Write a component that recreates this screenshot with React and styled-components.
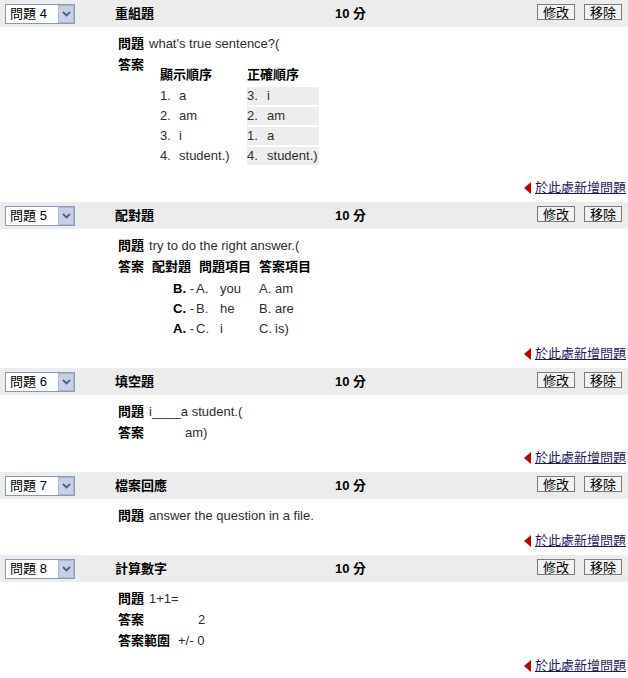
import React from 'react';
import styled, { createGlobalStyle } from 'styled-components';

const GlobalStyle = createGlobalStyle`
  body {
    margin: 0;
    background: #fff;
    font-family: "Liberation Sans", "Noto Sans CJK TC", sans-serif;
    font-size: 13px;
    color: #000;
  }
`;

const Page = styled.div`
  width: 628px;
`;

const Header = styled.div`
  display: flex;
  align-items: center;
  height: 27px;
  background: #ececec;
`;

const SelectCell = styled.div`
  width: 110px;
  padding-left: 5px;
`;

const FakeSelect = styled.div`
  display: flex;
  align-items: center;
  box-sizing: border-box;
  width: 70px;
  height: 20px;
  background: #fff;
  border: 1px solid #7f9db9;
`;

const SelectText = styled.span`
  flex: 1;
  padding-left: 4px;
  line-height: 18px;
`;

const SelectArrow = styled.span`
  display: flex;
  align-items: center;
  justify-content: center;
  box-sizing: border-box;
  width: 16px;
  height: 18px;
  background: #c8cfe4;
  border: 1px solid #aeb7d0;
`;

const TypeName = styled.div`
  width: 220px;
  font-weight: bold;
  line-height: 20px;
`;

const Score = styled.div`
  flex: 1;
  font-weight: bold;
  line-height: 20px;
`;

const Actions = styled.div`
  display: flex;
  gap: 9px;
  padding-right: 6px;
  align-self: flex-start;
  padding-top: 4px;
`;

const Btn = styled.button`
  box-sizing: border-box;
  height: 16px;
  padding: 0 5px;
  border: 1px solid #7a7a7a;
  background: #f2f2f2;
  font-family: inherit;
  font-size: 13px;
  line-height: 13px;
  color: #000;
`;

const Body = styled.div`
  padding: 6px 0 0 118px;
`;

const Line = styled.div`
  display: flex;
  align-items: flex-start;
  line-height: 21px;
`;

const Label = styled.span`
  font-weight: bold;
  margin-right: 5px;
`;

const Value = styled.span`
  color: #2e2e2e;
  padding-left: ${p => p.$indent || 0}px;
`;

const OrderTable = styled.div`
  display: grid;
  grid-template-columns: 87px 72px;
  grid-template-rows: 22px;
  grid-auto-rows: 20px;
  margin: 10px 0 7px 11px;
  color: #2e2e2e;
`;

const HeadCell = styled.div`
  font-weight: bold;
  color: #000;
  line-height: 21px;
  white-space: nowrap;
  padding-left: ${p => p.$pad || 0}px;
`;

const OrderCell = styled.div`
  line-height: 20px;
  ${p => p.$shaded && `
    background: #ededed;
    height: 18px;
    line-height: 18px;
    margin: 1px 0;
  `}
`;

const Num = styled.span`
  display: inline-block;
  width: ${p => p.$w}px;
`;

const MatchTable = styled.div`
  display: grid;
  grid-template-columns: 44px 63px 60px;
  grid-template-rows: 23px;
  grid-auto-rows: 20px;
  margin-left: 3px;
  color: #2e2e2e;
  line-height: 20px;
`;

const PairCell = styled.div`
  text-align: right;
  padding-right: 2px;
  white-space: nowrap;
  & b { color: #000; }
`;

const AddRow = styled.div`
  display: flex;
  justify-content: flex-end;
  align-items: center;
  height: 20px;
  margin: 5px 2px 4px 0;
`;

const Triangle = styled.span`
  width: 0;
  height: 0;
  border-top: 6px solid transparent;
  border-bottom: 6px solid transparent;
  border-right: 7px solid #c20000;
  margin-right: 4px;
`;

const AddLink = styled.a`
  color: #1d1d5c;
  text-decoration: underline;
  line-height: 20px;
`;

const Chevron = () => (
  <svg width="9" height="6" viewBox="0 0 9 6">
    <path d="M1 1 L4.5 4.5 L8 1" fill="none" stroke="#4d5f86" strokeWidth="1.8" />
  </svg>
);

const QuestionHeader = ({ no, type }) => (
  <Header>
    <SelectCell>
      <FakeSelect>
        <SelectText>問題 {no}</SelectText>
        <SelectArrow><Chevron /></SelectArrow>
      </FakeSelect>
    </SelectCell>
    <TypeName>{type}</TypeName>
    <Score>10 分</Score>
    <Actions>
      <Btn>修改</Btn>
      <Btn>移除</Btn>
    </Actions>
  </Header>
);

const AddQuestion = () => (
  <AddRow>
    <Triangle />
    <AddLink href="#">於此處新增問題</AddLink>
  </AddRow>
);

const shown = ['a', 'am', 'i', 'student.)'];
const correct = [['3.', 'i'], ['2.', 'am'], ['1.', 'a'], ['4.', 'student.)']];

const ReorderBody = () => (
  <Body>
    <Line><Label>問題</Label><Value>what's true sentence?(</Value></Line>
    <Line>
      <Label>答案</Label>
      <OrderTable>
        <HeadCell>顯示順序</HeadCell>
        <HeadCell>正確順序</HeadCell>
        {shown.map((s, i) => (
          <React.Fragment key={s}>
            <OrderCell><Num $w={19}>{i + 1}.</Num>{s}</OrderCell>
            <OrderCell $shaded><Num $w={20}>{correct[i][0]}</Num>{correct[i][1]}</OrderCell>
          </React.Fragment>
        ))}
      </OrderTable>
    </Line>
  </Body>
);

const pairs = [['B.', 'A.', 'you', 'A.', 'am'], ['C.', 'B.', 'he', 'B.', 'are'], ['A.', 'C.', 'i', 'C.', 'is)']];

const MatchBody = () => (
  <Body>
    <Line><Label>問題</Label><Value>try to do the right answer.(</Value></Line>
    <Line>
      <Label>答案</Label>
      <MatchTable>
        <HeadCell>配對題</HeadCell>
        <HeadCell $pad={3}>問題項目</HeadCell>
        <HeadCell>答案項目</HeadCell>
        {pairs.map(p => (
          <React.Fragment key={p[1]}>
            <PairCell><b>{p[0]}</b> -</PairCell>
            <div><Num $w={24}>{p[1]}</Num>{p[2]}</div>
            <div><Num $w={16}>{p[3]}</Num>{p[4]}</div>
          </React.Fragment>
        ))}
      </MatchTable>
    </Line>
  </Body>
);

const FillBody = () => (
  <Body>
    <Line><Label>問題</Label><Value>i____a student.(</Value></Line>
    <Line><Label>答案</Label><Value $indent={36}>am)</Value></Line>
  </Body>
);

const FileBody = () => (
  <Body>
    <Line><Label>問題</Label><Value>answer the question in a file.</Value></Line>
  </Body>
);

const CalcBody = () => (
  <Body>
    <Line><Label>問題</Label><Value>1+1=</Value></Line>
    <Line><Label>答案</Label><Value $indent={49}>2</Value></Line>
    <Line><Label>答案範圍</Label><Value $indent={3}>+/- 0</Value></Line>
  </Body>
);

const questions = [
  { no: 4, type: '重組題', Body: ReorderBody },
  { no: 5, type: '配對題', Body: MatchBody },
  { no: 6, type: '填空題', Body: FillBody },
  { no: 7, type: '檔案回應', Body: FileBody },
  { no: 8, type: '計算數字', Body: CalcBody },
];

const App = () => (
  <Page>
    <GlobalStyle />
    {questions.map(({ no, type, Body: QBody }) => (
      <section key={no}>
        <QuestionHeader no={no} type={type} />
        <QBody />
        <AddQuestion />
      </section>
    ))}
  </Page>
);

export default App;
